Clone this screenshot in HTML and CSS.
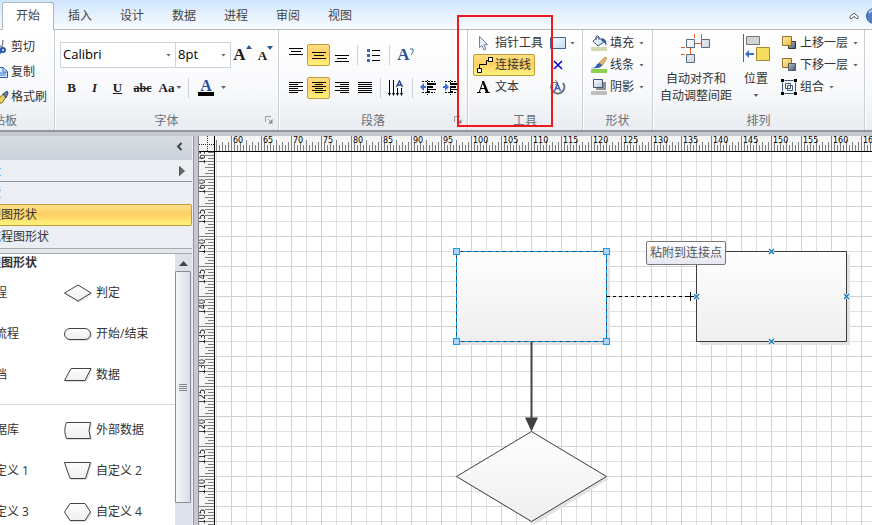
FILE: index.html
```html
<!DOCTYPE html>
<html lang="zh-CN">
<head>
<meta charset="utf-8">
<title>流程图</title>
<link rel="stylesheet" href="styles.css">
</head>
<body>
<svg class="defs" aria-hidden="true">
  <defs>
    <linearGradient id="fill" x1="0" y1="0" x2="0" y2="1"><stop offset="0" stop-color="#fefefe"/><stop offset="1" stop-color="#efefef"/></linearGradient>
    <linearGradient id="steel" x1="0" y1="0" x2="1" y2="1"><stop offset="0" stop-color="#fff"/><stop offset="1" stop-color="#b9c4d6"/></linearGradient>
    <linearGradient id="gold" x1="0" y1="0" x2="1" y2="1"><stop offset="0" stop-color="#fff0b0"/><stop offset="1" stop-color="#eeb63c"/></linearGradient>
    <linearGradient id="navy" x1="0" y1="0" x2="1" y2="1"><stop offset="0" stop-color="#b9c3d0"/><stop offset="1" stop-color="#48566a"/></linearGradient>
    <linearGradient id="glass" x1="0" y1="0" x2="1" y2="1"><stop offset="0" stop-color="#fff"/><stop offset="1" stop-color="#bcdcf4"/></linearGradient>
  </defs>
</svg>

<nav class="tabs">
  <a class="tab active" href="#home">开始</a>
  <a class="tab" href="#insert">插入</a>
  <a class="tab" href="#design">设计</a>
  <a class="tab" href="#data">数据</a>
  <a class="tab" href="#process">进程</a>
  <a class="tab" href="#review">审阅</a>
  <a class="tab" href="#view">视图</a>
  <button class="collapse" aria-label="折叠功能区"><svg width="10" height="8"><path d="M1 4.500 5 1l4 3.500v2H7.500L5 4.500 2.500 6.500H1z" fill="#fff" stroke="#555"/></svg></button>
  <button class="help" aria-label="帮助"><svg width="16" height="16"><circle cx="8" cy="8" r="7.500" fill="#4f7fcb" stroke="#3a5f9f"/><path d="M3 5a6 6 0 0 1 5-3" stroke="#b8d0f4" stroke-width="2" fill="none"/></svg></button>
</nav>

<section class="ribbon">
  <div class="group g-clip">
    <div class="body stack wide">
      <button class="cmd"><svg width="11" height="16"><path d="M3 1 2 9M-3 4l6 6" stroke="#889" stroke-width="1.500"/><circle cx="-1" cy="12" r="2" fill="none" stroke="#2a58b0" stroke-width="2"/><circle cx="3" cy="11" r="2" fill="none" stroke="#2a58b0" stroke-width="2"/></svg>剪切</button>
      <button class="cmd"><svg width="11" height="16"><path d="M-2 3.500h5l4.500 4v6H-2z" fill="#dcecff" stroke="#2a58b0"/><path d="M3 4v4h4M0 9h6M0 11h6" stroke="#3a78d0" fill="none"/></svg>复制</button>
      <button class="cmd"><svg width="11" height="16"><path d="m-2 11 5-6 3 3-4 6h-4z" fill="#f0d060" stroke="#8a6a20"/><path d="m3 5 4-3 1 2-2 5z" fill="#6b7fae" stroke="#34456e"/></svg>格式刷</button>
    </div>
    <div class="caption">贴板</div>
  </div>

  <div class="group g-font">
    <div class="body">
      <div class="row">
        <label class="combo name"><select aria-label="字体"><option>Calibri</option></select></label>
        <label class="combo size"><select aria-label="字号"><option>8pt</option></select></label>
        <button class="ico serif grow" aria-label="增大字号">A<svg width="6" height="4"><path d="m0 4 3-4 3 4z" fill="#2b579a"/></svg></button>
        <button class="ico serif shrink" aria-label="减小字号">A<svg width="6" height="4"><path d="m0 0 3 4 3-4z" fill="#2b579a"/></svg></button>
      </div>
      <div class="row">
        <button class="ico serif">B</button>
        <button class="ico serif italic">I</button>
        <button class="ico serif under">U</button>
        <button class="ico serif strike">abc</button>
        <button class="ico serif case">Aa<i class="arrow"></i></button>
        <span class="sep"></span>
        <button class="ico serif color"><b>A</b><i class="arrow"></i></button>
      </div>
    </div>
    <div class="caption">字体<svg class="launch" width="8" height="8"><path d="M.5 6V.5H6M3 3l3 3" fill="none" stroke="#999"/><path d="M7.500 3v4.500H3z" fill="#888"/></svg></div>
  </div>

  <div class="group g-para">
    <div class="body">
      <div class="row">
        <button class="ico" aria-label="顶端对齐"><svg width="14" height="14"><path d="M0 .5h14M2 3.500h10M0 6.500h14" stroke="#000"/></svg></button>
        <button class="ico on" aria-label="中部对齐"><svg width="14" height="14"><path d="M0 4.500h14M2 7.500h10M0 10.500h14" stroke="#000"/></svg></button>
        <button class="ico" aria-label="底端对齐"><svg width="14" height="14"><path d="M0 7.500h14M2 10.500h10M0 13.500h14" stroke="#000"/></svg></button>
        <span class="sep"></span>
        <button class="ico" aria-label="项目符号"><svg width="14" height="14"><path d="M5 2.500h8M5 7.500h8M5 12.500h8" stroke="#000"/><path d="M0 1h3v3H0zM0 6h3v3H0zM0 11h3v3H0z" fill="#3d65b5"/></svg></button>
        <span class="sep"></span>
        <button class="ico serif blue" aria-label="旋转文本">A<svg width="4" height="8"><path d="M0 1h3v3L1 7" fill="none" stroke="#3d65a5"/></svg></button>
      </div>
      <div class="row">
        <button class="ico" aria-label="左对齐"><svg width="14" height="14"><path d="M0 1.500h14M0 3.500h9M0 5.500h14M0 7.500h9M0 9.500h14M0 11.500h9" stroke="#000"/></svg></button>
        <button class="ico on" aria-label="居中"><svg width="14" height="14"><path d="M0 1.500h14M3 3.500h8M0 5.500h14M3 7.500h8M0 9.500h14M3 11.500h8" stroke="#000"/></svg></button>
        <button class="ico" aria-label="右对齐"><svg width="14" height="14"><path d="M0 1.500h14M5 3.500h9M0 5.500h14M5 7.500h9M0 9.500h14M5 11.500h9" stroke="#000"/></svg></button>
        <button class="ico" aria-label="两端对齐"><svg width="14" height="14"><path d="M0 1.500h14M0 3.500h14M0 5.500h14M0 7.500h14M0 9.500h14M0 11.500h14" stroke="#000"/></svg></button>
        <span class="sep"></span>
        <button class="ico" aria-label="文字方向"><svg width="16" height="16"><path d="M1.500 0v15M5.500 0v15M9.500 8v7M13.500 8v7" stroke="#000"/><path d="M0 13h3l-1.500 3zM4 13h3l-1.500 3zM8 13h3l-1.500 3zM12 13h3l-1.500 3z"/><path d="m8.500 7 3-6 3 6M10 5h3.500" fill="none" stroke="#2b4a90" stroke-width="1.500"/></svg></button>
        <span class="sep"></span>
        <button class="ico" aria-label="减少缩进"><svg width="16" height="16"><path d="M2 1.500h13M2 12.500h13" stroke="#000" stroke-dasharray="2 1"/><path d="M7 4h9M7 7h6" stroke="#000" stroke-width="2"/><path d="M7 9.500h9M7 11.500h3" stroke="#000"/><path d="M7.500 0v16" stroke="#000" stroke-dasharray="1 1"/><path d="m0 7 4-4v3h2v2H4v3z" fill="#3d6fd0"/></svg></button>
        <button class="ico" aria-label="增加缩进"><svg width="16" height="16"><path d="M2 1.500h13M2 12.500h13" stroke="#000" stroke-dasharray="2 1"/><path d="M7 4h9M7 7h6" stroke="#000" stroke-width="2"/><path d="M7 9.500h9M7 11.500h3" stroke="#000"/><path d="M7.500 0v16" stroke="#000" stroke-dasharray="1 1"/><path d="M6 7 2 3v3H0v2h2v3z" fill="#3d6fd0"/></svg></button>
      </div>
    </div>
    <div class="caption">段落<svg class="launch" width="8" height="8"><path d="M.5 6V.5H6M3 3l3 3" fill="none" stroke="#999"/><path d="M7.500 3v4.500H3z" fill="#888"/></svg></div>
  </div>

  <div class="group g-tools">
    <div class="body cols">
      <div class="stack">
        <button class="cmd"><svg width="16" height="16"><path d="M2.500 1.500v11l2.500-2 2 4.500 2-1-2-4 3.500-.5z" fill="#eef3fb" stroke="#6d7f9f"/></svg>指针工具</button>
        <button class="cmd on"><svg width="16" height="16"><path d="M2.500 11V7.500h7V3.500H12" fill="none" stroke="#000"/><path d="M.5 11.500h4v4h-4zM11.500.5h4v4h-4z" fill="#fff" stroke="#000"/></svg>连接线</button>
        <button class="cmd"><svg width="16" height="16"><path d="M0 13.500h4M8 13.500h5M2 13.500 6 3M3.500 9.500h5.500" fill="none" stroke="#000"/><path d="M5 2h2l5 12H9z"/></svg>文本</button>
      </div>
      <div class="stack">
        <button class="cmd"><svg width="16" height="12"><path d="M.5.5h15v11H.5z" fill="url(#glass)" stroke="#44648f"/></svg><i class="arrow"></i></button>
        <button class="cmd" aria-label="连接点"><svg width="16" height="12"><path d="m4 2 8 8M12 2l-8 8" stroke="#0000d8" stroke-width="1.500"/></svg></button>
        <button class="cmd" aria-label="文本块"><svg width="16" height="16"><path d="M2 5a6.500 6.500 0 1 0 11-1" fill="none" stroke="#666e7a" stroke-width="2"/><path d="M3 3.500h4M5 1l3 2.500L5 6" fill="none" stroke="#777"/><path d="m4.500 12 3-7 3 7M6 9.500h3.500" fill="none" stroke="#3b64b5" stroke-width="1.500"/></svg></button>
      </div>
    </div>
    <div class="caption">工具</div>
  </div>

  <div class="group g-shape">
    <div class="body stack">
      <button class="cmd"><svg width="16" height="16"><path d="M0 12h16v4H0z" fill="#d3d9b0"/><path d="m2 6 5-4 6 5-6 4z" fill="url(#glass)" stroke="#46566f"/><path d="M5 5V1.500Q6.500-.5 8 2v3" fill="none" stroke="#46566f"/><path d="M10 3q7 1 5 8-1-4-4-5z" fill="#2e5aa8"/></svg>填充<i class="arrow"></i></button>
      <button class="cmd"><svg width="16" height="16"><path d="M0 12h16v4H0z" fill="#8fd14f"/><path d="m8 6 6-6 2 1-5 8z" fill="#e5bd6b" stroke="#9c7431" stroke-width=".6"/><path d="M0 11q5 0 6-4 3-2 5 1-1 4-11 3z" fill="#2f62ad"/></svg>线条<i class="arrow"></i></button>
      <button class="cmd"><svg width="16" height="16"><path d="M0 12h16v4H0z" fill="#bebebe"/><path d="M5 3h10v8H5z" fill="#909090"/><path d="M2.500.5h9v8h-9z" fill="url(#steel)" stroke="#3e5377"/></svg>阴影<i class="arrow"></i></button>
    </div>
    <div class="caption">形状</div>
  </div>

  <div class="group g-arrange">
    <div class="body cols">
      <button class="big"><svg width="32" height="32"><path d="M14.500 1v4M21.500 1v8M15 10.500h6M1 14.500h4M10.500 15v6M1 21.500h4" stroke="#f05a1a" fill="none"/><g fill="url(#steel)" stroke="#596a84"><path d="M6.500 6.500h8v8h-8zM21.500 6.500h8v8h-8zM6.500 21.500h8v8h-8z"/></g></svg><span>自动对齐和<br>自动调整间距</span></button>
      <button class="big"><svg width="30" height="32"><path d="M2.500 1v28" stroke="#3a62b0"/><path d="M5.500 3.500h13v8h-13z" fill="#d0d3d8" stroke="#777"/><path d="M15.500 14.500h13v13h-13z" fill="#f8dc62" stroke="#a98a2a"/><path d="m4 21 4-4v3h5v2H8v3z" fill="#3f6fc8"/></svg><span>位置</span><i class="arrow"></i></button>
      <div class="stack">
        <button class="cmd"><svg width="16" height="16"><path d="M7.500 6.500h7v7h-7z" fill="url(#navy)" stroke="#334"/><path d="M1.500 1.500h9v9h-9z" fill="url(#gold)" stroke="#8f702c"/></svg>上移一层<i class="arrow"></i></button>
        <button class="cmd"><svg width="16" height="16"><path d="M1.500 1.500h9v9h-9z" fill="url(#gold)" stroke="#8f702c"/><path d="M7.500 6.500h7v7h-7z" fill="url(#navy)" stroke="#556"/></svg>下移一层<i class="arrow"></i></button>
        <button class="cmd"><svg width="16" height="16"><path d="M1.500 1.500h13v13h-13z" fill="none" stroke="#3f587f" stroke-dasharray="9 4" stroke-dashoffset="-2"/><path d="M4.500 4.500h5v5h-5zM6.500 6.500h5v5h-5z" fill="none" stroke="#3f587f"/><path d="M0 0h3v3H0zM13 0h3v3h-3zM0 13h3v3H0zM13 13h3v3h-3z"/></svg>组合<i class="arrow"></i></button>
      </div>
    </div>
    <div class="caption">排列</div>
  </div>
  <div class="mark"></div>
</section>

<main class="work">
  <aside class="panel">
    <header class="phead"><button aria-label="最小化"><svg width="7" height="9"><path d="M5.500 1 2 4.500 5.500 8" fill="none" stroke="#444" stroke-width="2"/></svg></button></header>
    <a class="prow first" href="#more"><span class="cut">状</span><svg width="6" height="10"><path d="m.5.5 5 4.500-5 4.500z" fill="#666" stroke="#555"/></svg></a>
    <a class="prow" href="#quick"><span class="cut">状</span></a>
    <a class="prow sel" href="#basic"><span class="name">程图形状</span></a>
    <a class="prow" href="#cross"><span class="name">流程图形状</span></a>
    <div class="splitter"></div>
    <div class="stencil">
      <div class="shapes">
        <h2>程图形状</h2>
        <div class="pair"><span>程</span><svg width="28" height="18"><path d="M.5 9 14 1l13 8-13 8z"/></svg><span>判定</span></div>
        <div class="pair"><span>流程</span><svg width="28" height="18"><rect x=".5" y="3.500" width="26" height="11" rx="5.500"/></svg><span>开始/结束</span></div>
        <div class="pair"><span>档</span><svg width="28" height="18"><path d="M7 2.500h20l-6 12H.500z"/></svg><span>数据</span></div>
        <hr>
        <div class="pair"><span>据库</span><svg width="28" height="18"><path d="M2.500 1.500h24q-3 8 0 16h-24q-3.500-8 0-16z"/></svg><span>外部数据</span></div>
        <div class="pair"><span>定义 1</span><svg width="28" height="18"><path d="M.5.5h26l-5 16H6z"/></svg><span>自定义 2</span></div>
        <div class="pair"><span>定义 3</span><svg width="28" height="18"><path d="M.5 9 6 .5h15L26.500 9 21 17.500H6z"/></svg><span>自定义 4</span></div>
      </div>
      <div class="scroll">
        <button aria-label="向上滚动"><svg width="9" height="6"><path d="m0 6 4.500-5L9 6z" fill="#444"/></svg></button>
        <div class="thumb"><i></i></div>
      </div>
    </div>
  </aside>

  <section class="editor">
    <div class="corner"></div>
    <ol class="ruler-x">
      <li>60</li><li>65</li><li>70</li><li>75</li><li>80</li><li>85</li><li>90</li><li>95</li><li>100</li><li>105</li><li>110</li><li>115</li><li>120</li><li>125</li><li>130</li><li>135</li><li>140</li><li>145</li><li>150</li><li>155</li><li>160</li><li>165</li>
    </ol>
    <ol class="ruler-y">
      <li><span>165</span></li><li><span>160</span></li><li><span>155</span></li><li><span>150</span></li><li><span>145</span></li><li><span>140</span></li><li><span>135</span></li><li><span>130</span></li><li><span>125</span></li><li><span>120</span></li><li><span>115</span></li><li><span>110</span></li><li><span>105</span></li>
    </ol>
    <div class="canvas">
      <svg width="100%" height="100%">
        <defs>
          <g id="cp"><path d="m-2.500-2.500 5 5M2.500-2.500l-5 5" stroke="#fff" stroke-width="3"/><path d="m-2.500-2.500 5 5M2.500-2.500l-5 5" stroke="#0a78c0" stroke-width="1.300"/></g>
          <rect id="h" x="-3" y="-3" width="6" height="6" fill="#a8d4ff" stroke="#1a9ae8"/>
        </defs>
        <g transform="translate(-215 -152)">
          <g fill="#e2e2e2">
            <path d="M460 254h150v91H460zM700 254h150v91H700z"/>
            <path d="m535 434 74 45-74 45-75-45z"/>
          </g>
          <g fill="url(#fill)" stroke="#3c3c3c">
            <path d="M456.500 251.500h150v90h-150z"/>
            <path d="M696.500 251.500h150v90h-150z"/>
            <path d="m531.500 431.500 75 45-75 45-75-45z"/>
          </g>
          <path d="M456.500 251.500h150v90h-150z" fill="none" stroke="#00a2ff" stroke-dasharray="4 3"/>
          <path d="M531.500 342v78" stroke="#444" stroke-width="2"/>
          <path d="M525 417.500h13l-6.500 14z" fill="#404040"/>
          <path d="M607 296.500h83" stroke="#000" stroke-dasharray="3 3"/>
          <path d="M686 296.500h9M690.500 292v9" stroke="#000"/>
          <use href="#h" x="456.500" y="251.500"/><use href="#h" x="606.500" y="251.500"/><use href="#h" x="456.500" y="341.500"/><use href="#h" x="606.500" y="341.500"/>
          <use href="#cp" x="771.500" y="251.500"/><use href="#cp" x="696.500" y="296.500"/><use href="#cp" x="846.500" y="296.500"/><use href="#cp" x="771.500" y="341.500"/>
        </g>
      </svg>
      <div class="tip" role="tooltip">粘附到连接点</div>
    </div>
  </section>
</main>
</body>
</html>
```
FILE: styles.css
```css
* { box-sizing: border-box; }
body {
  margin: 0;
  height: 100vh;
  display: flex;
  flex-direction: column;
  overflow: hidden;
  background: #c5c9cd;
  color: #333;
  font: 12px/16px "Open Sans", "Noto Sans CJK SC", sans-serif;
}
a { color: inherit; text-decoration: none; }
button { border: 0; padding: 0; background: none; color: inherit; font: inherit; }
svg { display: block; flex: none; }
ol { margin: 0; padding: 0; list-style: none; }
.defs { position: absolute; width: 0; height: 0; }

/* Tab strip */
.tabs {
  display: flex;
  flex: none;
  height: 30px;
  padding: 2px 0 0 2px;
  background: linear-gradient(#cfe5fb, #e5f1fd 50%, #f8fbff);
  border-bottom: 1px solid #b6babf;
}
.tab { width: 52px; height: 28px; padding-top: 5px; text-align: center; border: 1px solid transparent; border-bottom: 0; color: #444; }
.tab.active { background: #fff; border-color: #b0b6be; border-radius: 3px 3px 0 0; }
.collapse { margin-left: auto; padding: 0 7px; }
.help { margin-right: -10px; }

/* Ribbon */
.ribbon {
  position: relative;
  display: flex;
  flex: none;
  height: 102px;
  background: linear-gradient(#fff, #f8f9fb 60%, #e9ecf0);
  border-bottom: 2px solid #92979d;
}
.group { display: flex; flex: none; flex-direction: column; border-right: 1px solid #cbced3; box-shadow: 1px 0 #fff; }
.g-clip { width: 55px; }
.g-font { width: 224px; }
.g-para { width: 189px; }
.g-tools { width: 115px; }
.g-shape { width: 70px; }
.g-arrange { width: 212px; }
.body { flex: 1; min-height: 0; padding: 2px 5px; }
.g-font .body, .g-para .body { padding-top: 8px; }
.caption { position: relative; flex: none; height: 20px; padding-top: 3px; text-align: center; color: #6a7079; }
.g-clip .caption { margin-left: -7px; text-align: left; }
.g-clip .body { padding: 4px 0; }
.launch { position: absolute; right: 5px; top: 6px; }
.cols { display: flex; }
.stack { display: flex; flex-direction: column; align-items: flex-start; }
.cmd { display: flex; align-items: center; flex: none; height: 22px; gap: 3px; padding: 0 3px; border: 1px solid transparent; border-radius: 2px; white-space: nowrap; }
.wide .cmd { height: 25px; padding: 0; margin-left: -1px; gap: 0; }
.g-tools .cols { gap: 2px; }
.g-tools .cmd { gap: 2px; }
.g-tools .stack:last-child .cmd { padding: 0; gap: 2px; }
.g-shape .body { padding: 2px 4px; }
.arrow { width: 5px; height: 3px; margin-left: 2px; background: #666; clip-path: polygon(0 0, 100% 0, 50% 100%); }
.on { border: 1px solid #c29b3b; border-radius: 2px; background: linear-gradient(#fedf80, #fdcf63 45%, #fff37b); }

.row { display: flex; align-items: center; height: 33px; }
.combo { position: relative; flex: none; height: 26px; background: #fff; border: 1px solid #cdd3da; }
.combo.name { width: 116px; }
.combo.size { width: 55px; border-left: 0; }
.combo select { display: block; width: 100%; height: 22px; padding: 0 2px; border: 0; background: none; appearance: none; color: #000; font: 13px "Open Sans", sans-serif; }
.combo::after { content: ""; position: absolute; right: 4px; top: 11px; width: 5px; height: 3px; background: #666; clip-path: polygon(0 0, 100% 0, 50% 100%); }
.ico { display: flex; align-items: center; justify-content: center; flex: none; width: 23px; height: 22px; }
.serif { color: #1d1d1d; font: bold 13px/16px "Liberation Serif", serif; }
.grow { font-size: 17px; align-items: flex-start; padding-top: 3px; }
.grow svg, .shrink svg { margin-top: -2px; }
.shrink { font-size: 13px; align-items: flex-start; padding-top: 4px; }
.italic { font-style: italic; }
.under { text-decoration: underline; }
.strike { width: 27px; text-decoration: line-through; font-size: 12px; }
.case { width: 28px; }
.color { width: 30px; margin-left: 4px; }
.color b { width: 16px; height: 17px; color: #2b4f96; font-size: 16px; line-height: 13px; border-bottom: 4px solid #000; }
.color .arrow { margin-left: 7px; }
.blue { color: #2f528f; font-size: 17px; }
.blue svg { margin-bottom: 6px; }
.sep { width: 1px; height: 20px; margin: 0 4px; background: #cdd0d5; }

.big { display: flex; flex-direction: column; align-items: center; padding-top: 1px; white-space: nowrap; line-height: 17px; }
.g-arrange .cols { gap: 9px; padding: 2px 4px; }
.g-arrange .big:first-child { margin-left: 3px; }
.big .arrow { margin: 7px 0 0; }
.g-arrange .big span { padding-top: 5px; }
.g-arrange .cmd { padding: 0; }
.g-arrange .cmd .arrow { margin-left: 2px; }
.mark { position: absolute; left: 457px; top: -15px; width: 96px; height: 112px; border: 2px solid #f01818; }

/* Work area */
.work { display: flex; flex: 1; min-height: 0; padding-top: 4px; }
.panel { display: flex; flex-direction: column; flex: none; width: 194px; padding-right: 1px; background: #ebeff4; border-right: 1px solid #92979d; overflow: hidden; }
.phead { display: flex; align-items: center; justify-content: flex-end; flex: none; height: 24px; padding: 0 9px 4px; background: linear-gradient(#d8dde3, #ccd2da); }
.prow { display: flex; align-items: center; justify-content: space-between; flex: none; height: 22px; padding-right: 7px; white-space: nowrap; }
.prow.first { border-bottom: 1px solid #8e949c; }
.prow.sel { border: 1px solid #c29b3b; border-left: 0; border-radius: 0 2px 2px 0; background: linear-gradient(#fee08a, #fdcf63 45%, #fff37b); }
.prow .name { margin-left: -11px; }
.cut { margin-left: -11px; color: #2f62ad; }
.splitter { flex: none; height: 6px; background: #e4e7eb; border: solid #a6abb2; border-width: 1px 0; }
.stencil { display: flex; flex: 1; min-height: 0; background: #fff; }
.shapes { flex: 1; overflow: hidden; }
h2 { margin: 0 0 0 -11px; font-size: 12px; line-height: 18px; }
.pair { display: grid; grid-template-columns: 69px 28px auto; align-items: center; height: 41px; margin-left: -5px; }
.pair span:last-child { padding-left: 4px; }
.pair svg { fill: url(#fill); stroke: #444; filter: drop-shadow(1px 1px 0 #ddd); }
hr { margin: 9px 0 4px; border: 0; border-top: 1px solid #d8dadd; }
.scroll { display: flex; flex-direction: column; width: 17px; padding-bottom: 22px; background: #dde1e9; }
.scroll button { display: flex; align-items: center; justify-content: center; flex: none; height: 17px; }
.thumb { display: flex; flex: 1; align-items: center; justify-content: center; margin-right: 1px; border: 1px solid #858d99; border-radius: 1px; background: linear-gradient(90deg, #f4f6fa, #d9dde8); }
.thumb i { width: 8px; height: 7px; background: repeating-linear-gradient(#888 0 1px, transparent 1px 2px); }

.editor { display: grid; flex: 1; min-width: 0; grid-template: 16px minmax(0, 1fr) / 16px minmax(0, 1fr); margin-left: 4px; border-left: 1px solid #888; background: #fff; }
.corner {
  border-right: 1px solid #000; border-bottom: 1px solid #000;
  background:
    repeating-linear-gradient(90deg, #1616c0 0 1px, transparent 1px 2px) 0 8px / 100% 1px no-repeat,
    repeating-linear-gradient(#1616c0 0 1px, transparent 1px 2px) 8px 0 / 1px 100% no-repeat,
    #f5f5f6;
}
.ruler-x, .ruler-y { display: flex; overflow: hidden; color: #000; font: 8px/8px "DejaVu Sans", sans-serif; }
.ruler-x {
  padding-left: 16px;
  border-bottom: 1px solid #000;
  background:
    linear-gradient(90deg, #808080 1px, transparent 1px) 1px 100% / 6px 9px repeat-x,
    linear-gradient(90deg, #808080 1px, transparent 1px) 4px 100% / 6px 6px repeat-x,
    linear-gradient(90deg, #808080 1px, transparent 1px) 1px 100% / 30px 11px repeat-x,
    #f5f5f6;
}
.ruler-x li { flex: none; width: 30px; padding: 1px 0 0 1px; border-left: 1px solid #808080; }
.ruler-y {
  flex-direction: column;
  border-right: 1px solid #000;
  background:
    linear-gradient(#808080 1px, transparent 1px) 100% 3px / 9px 6px repeat-y,
    linear-gradient(#808080 1px, transparent 1px) 100% 0 / 6px 6px repeat-y,
    linear-gradient(#808080 1px, transparent 1px) 100% 9px / 11px 30px repeat-y,
    #f5f5f6;
}
.ruler-y li { flex: none; height: 30px; padding-top: 2px; border-top: 1px solid #808080; }
.ruler-y li:first-child { margin-top: -6px; }
.ruler-y span { display: block; width: 8px; writing-mode: vertical-rl; transform: rotate(180deg); }
.canvas {
  position: relative;
  background:
    linear-gradient(90deg, #d2d2d2 1px, transparent 1px) 16px 0 / 30px 30px,
    linear-gradient(#d2d2d2 1px, transparent 1px) 0 24px / 30px 30px,
    linear-gradient(90deg, #e0e0e0 1px, transparent 1px) 1px 0 / 30px 30px,
    linear-gradient(#e0e0e0 1px, transparent 1px) 0 9px / 30px 30px,
    #fff;
}
.tip { position: absolute; left: 431px; top: 89px; padding: 3px; border: 1px solid #767676; border-radius: 2px; background: linear-gradient(#fff, #e6e7f2); color: #555; white-space: nowrap; }
```
